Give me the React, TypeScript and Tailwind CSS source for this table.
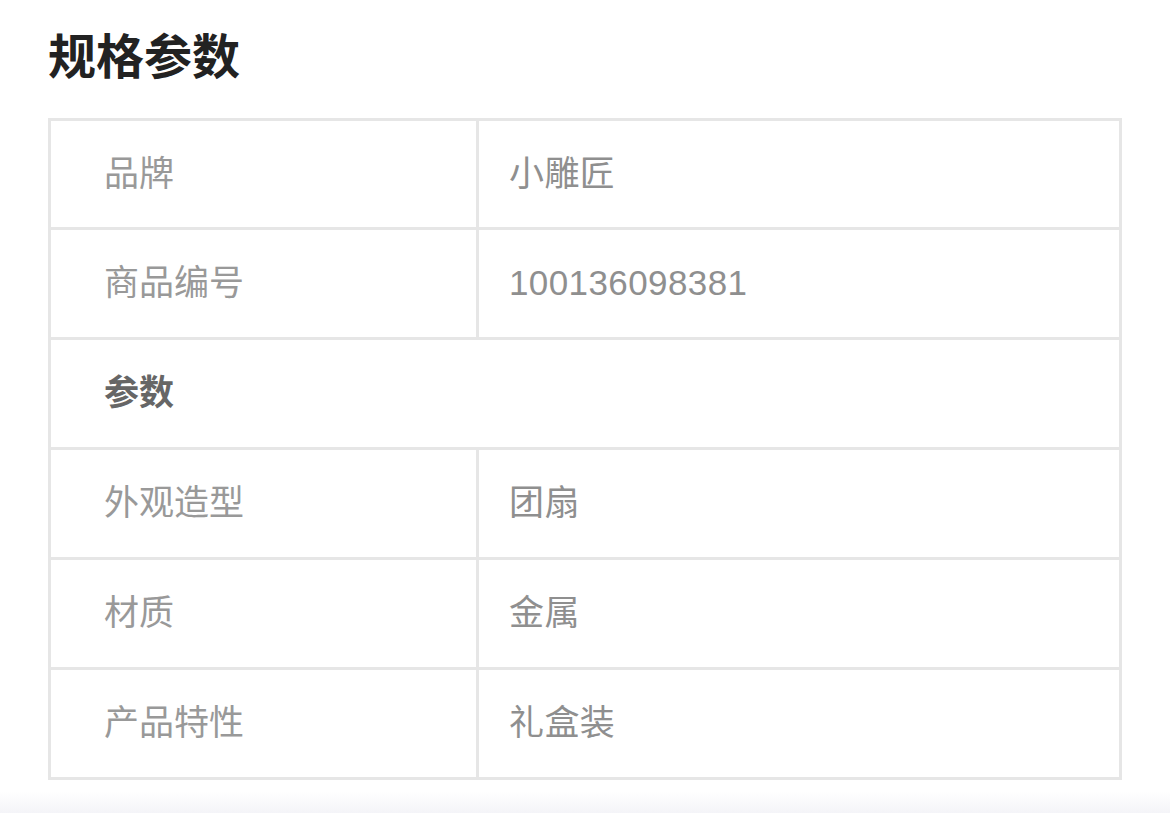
import React from "react";

const rows: { label: string; value?: string; header?: boolean }[] = [
  { label: "品牌", value: "小雕匠" },
  { label: "商品编号", value: "100136098381" },
  { label: "参数", header: true },
  { label: "外观造型", value: "团扇" },
  { label: "材质", value: "金属" },
  { label: "产品特性", value: "礼盒装" },
];

export default function App() {
  return (
    <div
      className="w-[1170px] h-[813px] bg-white relative overflow-hidden"
      style={{ fontFamily: '"Liberation Sans", "Noto Sans CJK SC", sans-serif' }}
    >
      <div className="pl-[48px] pt-[34px]">
        <h1 className="text-[48px] leading-none font-bold text-[#222222] h-[48px]">规格参数</h1>
        <div className="mt-[36px] w-[1074px] border-[3px] border-[#e6e6e6] flex flex-col">
          {rows.map((r, i) => (
            <div
              key={i}
              className={`flex items-center ${i > 0 ? "h-[110px] border-t-[3px] border-[#e6e6e6]" : "h-[106px]"}`}
            >
              {r.header ? (
                <div className="pl-[53px] text-[35px] font-bold text-[#666666]">{r.label}</div>
              ) : (
                <>
                  <div className="w-[428px] h-full flex items-center pl-[53px] border-r-[3px] border-[#e6e6e6] text-[35px] text-[#999999]">
                    {r.label}
                  </div>
                  <div className="flex-1 pl-[30px] text-[35px] tracking-[0.4px] text-[#8f8f8f]">{r.value}</div>
                </>
              )}
            </div>
          ))}
        </div>
      </div>
      <div className="absolute left-0 right-0 bottom-0 h-[22px] bg-gradient-to-b from-white to-[#f4f4f8]" />
    </div>
  );
}
